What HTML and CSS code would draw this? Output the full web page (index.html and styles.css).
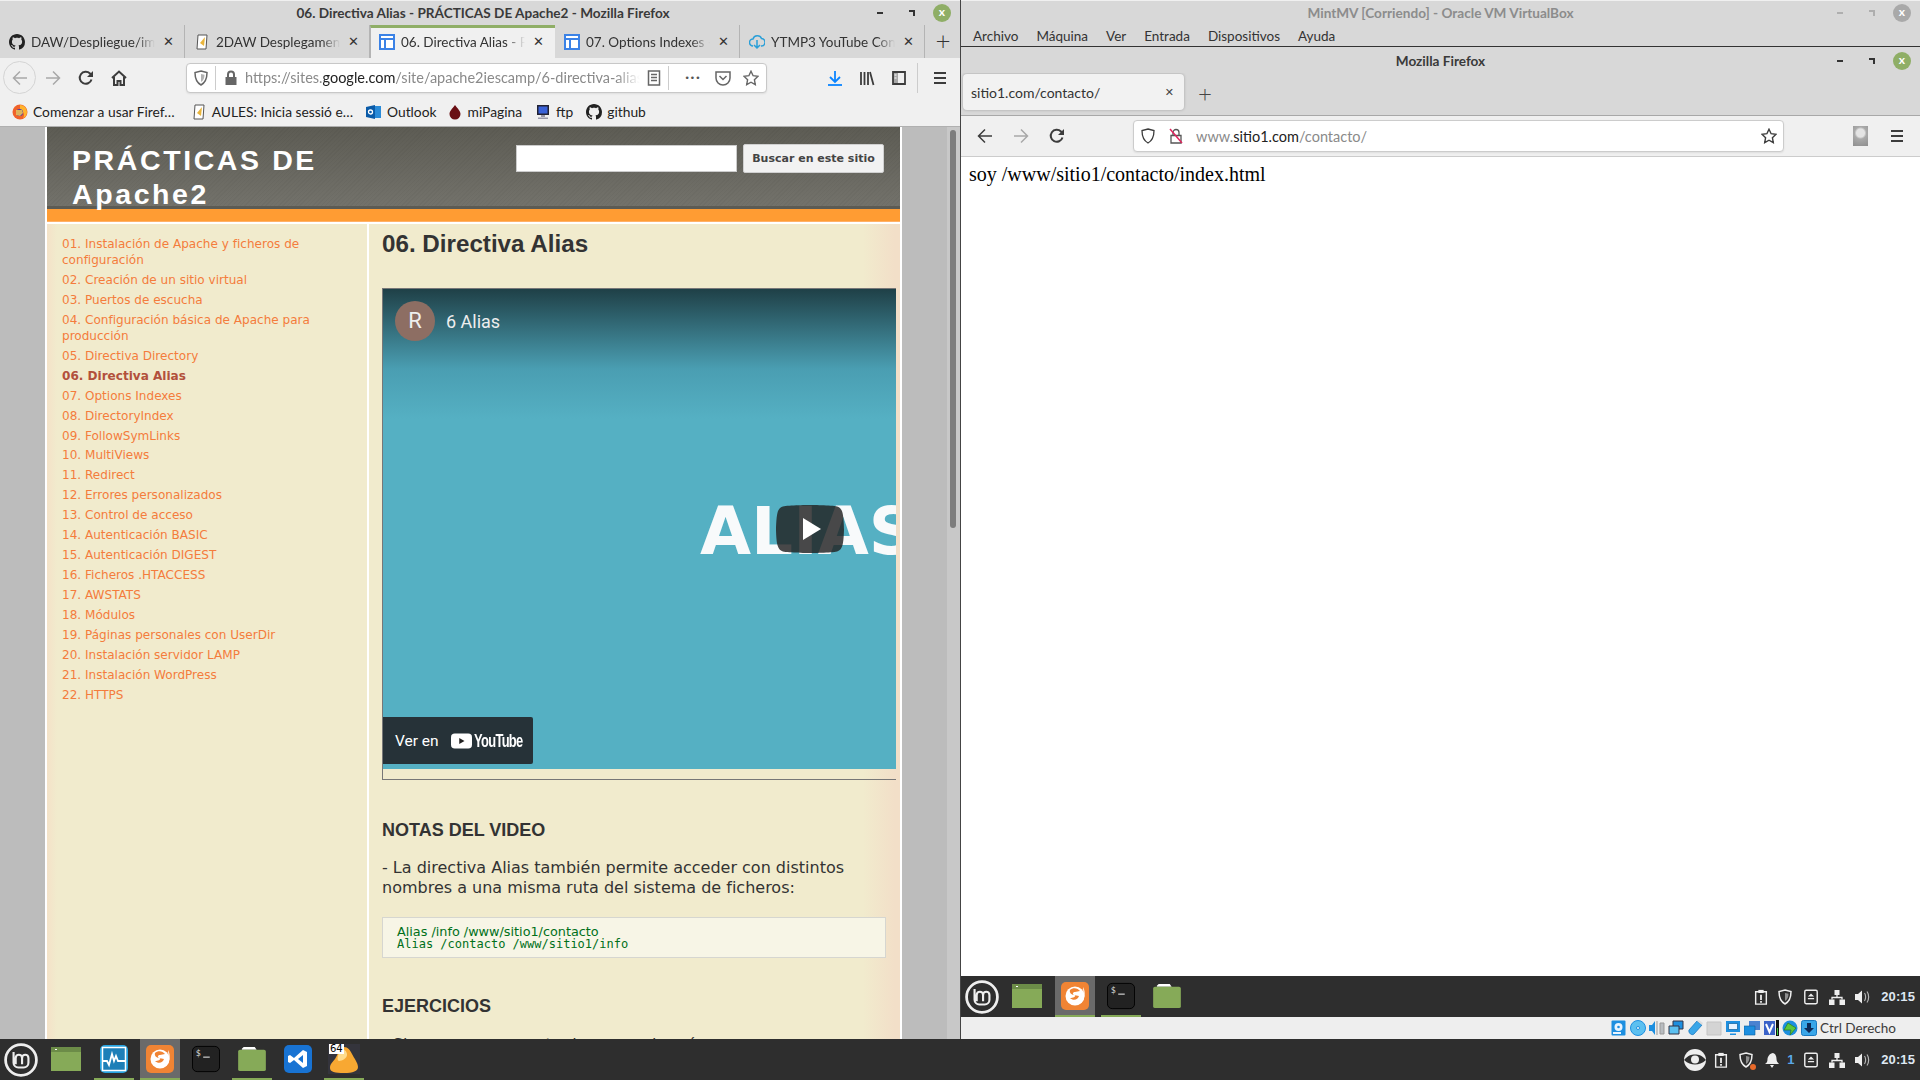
FILE: index.html
```html
<!DOCTYPE html>
<html lang="es">
<head>
<meta charset="utf-8">
<title>Escritorio</title>
<link rel="stylesheet" href="styles.css">
</head>
<body>
<svg class="defs" aria-hidden="true">
  <symbol id="gh" viewBox="0 0 16 16"><path d="M8 0C3.58 0 0 3.58 0 8c0 3.54 2.29 6.53 5.47 7.59.4.07.55-.17.55-.38 0-.19-.01-.82-.01-1.49-2.01.37-2.53-.49-2.69-.94-.09-.23-.48-.94-.82-1.13-.28-.15-.68-.52-.01-.53.63-.01 1.08.58 1.23.82.72 1.21 1.87.87 2.33.66.07-.52.28-.87.51-1.07-1.78-.2-3.64-.89-3.64-3.95 0-.87.31-1.59.82-2.15-.08-.2-.36-1.02.08-2.12 0 0 .67-.21 2.2.82.64-.18 1.32-.27 2-.27.68 0 1.36.09 2 .27 1.53-1.04 2.2-.82 2.2-.82.44 1.1.16 1.92.08 2.12.51.56.82 1.27.82 2.15 0 3.07-1.87 3.75-3.65 3.95.29.25.54.73.54 1.48 0 1.07-.01 1.93-.01 2.2 0 .21.15.46.55.38A8.013 8.013 0 0016 8c0-4.42-3.58-8-8-8z" fill="#222"/></symbol>
  <symbol id="sites" viewBox="0 0 16 16"><path d="M1 1h14v14H1z M1 5h14 M6 5v10" fill="#fff" stroke="#3b82e6" stroke-width="2"/></symbol>
  <symbol id="moodle" viewBox="0 0 16 16"><path d="M4 1h9l-1 14H3z" fill="#fff" stroke="#555"/><path d="M6 9l5-6-1 9z" fill="#e9b53c"/></symbol>
  <symbol id="ytmp3" viewBox="0 0 16 16"><path d="M4 12a3.5 3.5 0 0 1 0-7 4.5 4.5 0 0 1 8.500-.5A3.700 3.700 0 0 1 12 12M8 6v8m-3-3l3 3 3-3" fill="none" stroke="#2a9fd8" stroke-width="1.500"/></symbol>
  <symbol id="ffx" viewBox="0 0 16 16"><circle cx="8" cy="8" r="7.500" fill="#f0622a"/><path d="M8 1a7 7 0 0 1 7 7 7 7 0 0 1-4 6.300C13 11 12 7 8 6z" fill="#ffb32c"/><circle cx="7.500" cy="8.500" r="3.500" fill="#4a3aa8"/><path d="M4 6h6l1 3-3 3-4-1z" fill="#ffd24a" opacity=".8"/></symbol>
  <symbol id="back" viewBox="0 0 16 16"><path d="M15 8H2m6-6.500L1.500 8 8 14.500" fill="none" stroke="currentColor" stroke-width="1.500"/></symbol>
  <symbol id="fwd" viewBox="0 0 16 16"><path d="M1 8h13M8 1.500 14.500 8 8 14.500" fill="none" stroke="currentColor" stroke-width="1.500"/></symbol>
  <symbol id="reload" viewBox="0 0 16 16"><path d="M13.500 9.500A6 6 0 1 1 12 3.500L14 5.500" fill="none" stroke="currentColor" stroke-width="2"/><path d="M15 1v6H9z" fill="currentColor"/></symbol>
  <symbol id="home" viewBox="0 0 16 16"><path d="M1 8l7-6.500L15 8M3 7v8h3.500v-4h3v4H13V7" fill="none" stroke="currentColor" stroke-width="2"/></symbol>
  <symbol id="shield" viewBox="0 0 16 16"><path d="M8 1l6 1.500c0 6-1.500 10-6 12.500C3.500 12.500 2 8.500 2 2.500z" fill="none" stroke="currentColor" stroke-width="1.500"/><path d="M8 4l3.500.8C11.500 8 10.500 10.500 8 12z" fill="currentColor" opacity=".5"/></symbol>
  <symbol id="shield0" viewBox="0 0 16 16"><path d="M8 1l6 1.500c0 6-1.500 10-6 12.500C3.500 12.500 2 8.500 2 2.500z" fill="none" stroke="currentColor" stroke-width="1.300"/></symbol>
  <symbol id="lock" viewBox="0 0 16 16"><path d="M2.500 7h11v8h-11z" fill="currentColor"/><path d="M5 7V4.500a3 3 0 0 1 6 0V7" fill="none" stroke="currentColor" stroke-width="2"/></symbol>
  <symbol id="lockx" viewBox="0 0 16 16"><path d="M3 7.500h10v7.500H3zM5 7.500V4.500a3 3 0 0 1 6 0v3" fill="none" stroke="#555" stroke-width="1.300"/><path d="M2 1l12 14" stroke="#e0245e" stroke-width="1.500"/></symbol>
  <symbol id="reader" viewBox="0 0 16 16"><path d="M2.500 1h11v14h-11zM5 4.500h6M5 7.500h6M5 10.500h6" fill="none" stroke="currentColor" stroke-width="1.500"/></symbol>
  <symbol id="pocket" viewBox="0 0 16 16"><path d="M1 2h14v6a7 7 0 0 1-14 0z" fill="none" stroke="currentColor" stroke-width="1.500"/><path d="M4.500 6L8 9.500 11.500 6" fill="none" stroke="currentColor" stroke-width="1.500"/></symbol>
  <symbol id="star" viewBox="0 0 16 16"><path d="M8 1.200l2.100 4.500 4.900.6-3.600 3.400.9 4.900L8 12.200l-4.300 2.400.9-4.900L1 6.300l4.900-.6z" fill="none" stroke="currentColor" stroke-width="1.400"/></symbol>
  <symbol id="dl" viewBox="0 0 16 16"><path d="M8 1v10M3 7l5 5 5-5" fill="none" stroke="#0a84ff" stroke-width="1.800"/><path d="M1 15h14" stroke="#0a84ff" stroke-width="1.800"/></symbol>
  <symbol id="library" viewBox="0 0 16 16"><path d="M2 2v13M5.500 2v13M9 2v13M11 2l3.500 13" fill="none" stroke="currentColor" stroke-width="1.800"/></symbol>
  <symbol id="sidebar" viewBox="0 0 16 16"><path d="M2 2h12v12H2z" fill="none" stroke="currentColor" stroke-width="1.800"/><path d="M2 2h5v12H2z" fill="currentColor" opacity=".4"/><path d="M3.500 5h2M3.500 8h2" stroke="#fff"/></symbol>
  <symbol id="menu" viewBox="0 0 16 16"><path d="M2 3h12M2 8h12M2 13h12" stroke="currentColor" stroke-width="1.800"/></symbol>
  <symbol id="outlook" viewBox="0 0 16 16"><path d="M5 2h10v12H5z" fill="#2a8bd8"/><path d="M0 3l9-2v14l-9-2z" fill="#0a5ba8"/><circle cx="4.500" cy="8" r="2" fill="none" stroke="#fff" stroke-width="1.300"/></symbol>
  <symbol id="drop" viewBox="0 0 16 16"><path d="M8 1c3 4 5.500 6 5.500 9A5.500 5.500 0 0 1 2.500 10C2.500 7 5 5 8 1z" fill="#6a0f14"/></symbol>
  <symbol id="ftp" viewBox="0 0 16 16"><path d="M2 1h12v10H2z" fill="#223" /><path d="M3.500 2.500h9v7h-9z" fill="#3a62d8"/><path d="M6 11h4v2H6zM3 13.500h10V15H3z" fill="#99a"/></symbol>
  <symbol id="mint" viewBox="0 0 32 32"><circle cx="16" cy="16" r="14.500" fill="none" stroke="#eee" stroke-width="2.600"/><path d="M9 8.500v10a4.500 4.500 0 0 0 4.500 4.500h5a4.500 4.500 0 0 0 4.500-4.500V14a3 3 0 0 0-6 0v6m0-6a3 3 0 0 0-6 0v6" fill="none" stroke="#eee" stroke-width="2"/></symbol>
  <symbol id="fgreen" viewBox="0 0 30 24"><path d="M0 0h30v24H0z" fill="#86aa58"/><path d="M0 0h30v5H0z" fill="#6c8c48"/><path d="M4 2h2v1H4z" fill="#fff"/></symbol>
  <symbol id="folder" viewBox="0 0 30 26"><path d="M4 2l2-2h12l2 3h-16z" fill="#fff"/><path d="M0 5a2 2 0 0 1 2-2h26a2 2 0 0 1 2 2v19a2 2 0 0 1-2 2H2a2 2 0 0 1-2-2z" fill="#86aa58"/></symbol>
  <symbol id="sysmon" viewBox="0 0 28 28"><rect width="28" height="28" rx="5" fill="#27a3e0"/><rect x="2.500" y="2.500" width="23" height="23" fill="#1d7fb8" stroke="#fff" stroke-width="1.500"/><path d="M3 16h4l2 4 3-11 2 7 2-5 2 5h7" fill="none" stroke="#fff" stroke-width="1.800"/></symbol>
  <symbol id="ffapp" viewBox="0 0 28 28"><rect width="28" height="28" rx="5" fill="#f08434"/><circle cx="14" cy="14" r="9.500" fill="#fff"/><path d="M9 8c3-3 8-2 10 1l-5 1c-2 0-3 2-1 3l5 1c-1 4-6 5-9 2 3 0 6-1 5-3-3 0-6-2-5-5z" fill="#f08434"/><path d="M22 5c3 5 2 13-3 17 3-5 4-11 3-17z" fill="#fff"/></symbol>
  <symbol id="term" viewBox="0 0 30 28"><rect x=".5" y=".5" width="29" height="27" rx="5" fill="#222" stroke="#000"/><text x="4" y="11" font-family="DejaVu Sans Mono" font-size="9" fill="#ddd">$</text><path d="M12 12h7" stroke="#ddd" stroke-width="1.200"/></symbol>
  <symbol id="vscode" viewBox="0 0 28 28"><rect width="28" height="28" rx="5" fill="#1873d3"/><path d="M19 5l4 2v14l-4 2-9-8-4 3-2-1v-6l2-1 4 3zM19 10l-5 4 5 4z" fill="#fff"/></symbol>
  <symbol id="vbox64" viewBox="0 0 32 30"><rect width="32" height="30" fill="#34343c"/><path d="M16 3c4 0 6 3 8 7s6 9 6 13-5 6-14 6-14-1-14-5 2-5 5-9 4-12 9-12z" fill="#f8a832"/><path d="M14 6c3-1 5 2 5 5s-5 6-8 6-1-9 3-11z" fill="#ffdc8c"/></symbol>
  <symbol id="clip" viewBox="0 0 16 18"><path d="M2 3h12v14H2z" fill="none" stroke="currentColor" stroke-width="1.600"/><path d="M5 1h6v3.500H5z" fill="currentColor"/><path d="M8 6.500v6M8 13.500v2" stroke="currentColor" stroke-width="2"/></symbol>
  <symbol id="eject" viewBox="0 0 16 18"><rect x="1" y="1.500" width="14" height="15" rx="1.500" fill="none" stroke="currentColor" stroke-width="1.600"/><path d="M8 5l3.500 3.500h-7zM4.500 10h7v1.500h-7z" fill="currentColor"/></symbol>
  <symbol id="net" viewBox="0 0 16 16"><path d="M5.500 1h5v5h-5zM0 10.500h5.500V16H0zM10.500 10.500H16V16h-5.500z" fill="currentColor"/><path d="M8 6v3M3 10.500V8.500h10v2" fill="none" stroke="currentColor" stroke-width="1.300"/></symbol>
  <symbol id="vol" viewBox="0 0 16 16"><path d="M0 5h3l4-3.500v13L3 11H0z" fill="currentColor"/><path d="M9.500 4c1.500 2 1.500 6 0 8M12 2.500c2.200 3 2.200 8 0 11" fill="none" stroke="currentColor" stroke-width="1.200" opacity=".7"/></symbol>
  <symbol id="bell" viewBox="0 0 16 16"><path d="M9 1c3 1 3.500 4 3.500 6s1 3.500 2.500 5H1c2-1 2.500-3 2.500-5S6 1 9 1zM6 13h4l-2 3z" fill="currentColor"/></symbol>
  <symbol id="eye" viewBox="0 0 22 22"><circle cx="11" cy="11" r="11" fill="#eee"/><path d="M0 11c4-4.500 7-5.500 11-5.500s7 1 11 5.500c-4 3.500-7 4.500-11 4.500S4 14.500 0 11z" fill="#2e2e2e"/><circle cx="11" cy="10.500" r="4" fill="#eee"/></symbol>
  <symbol id="s-hdd" viewBox="0 0 16 16"><rect x=".5" y=".5" width="14" height="15" rx="1" fill="#1d8fe0"/><circle cx="7.500" cy="7" r="4" fill="#e8f4ff"/><circle cx="7.500" cy="7" r="1.300" fill="#1d8fe0"/><path d="M2 13h8" stroke="#e8f4ff" stroke-width="2"/></symbol>
  <symbol id="s-cd" viewBox="0 0 16 16"><circle cx="8" cy="8" r="7.500" fill="#5cc0f0" stroke="#1d8fe0"/><circle cx="8" cy="8" r="1.500" fill="#fff" stroke="#1d8fe0"/></symbol>
  <symbol id="s-audio" viewBox="0 0 16 16"><path d="M0 5h3l3-4v14l-3-4H0z" fill="#1d8fe0"/><path d="M8 1v14M11 3h4v11h-4z" fill="#b8bcc0" stroke="#999"/></symbol>
  <symbol id="s-net" viewBox="0 0 16 16"><path d="M5 1h10v8H5z" fill="#1d8fe0" stroke="#334"/><path d="M1 6h10v8H1z" fill="#5cc0f0" stroke="#334"/></symbol>
  <symbol id="s-usb" viewBox="0 0 16 16"><path d="M10 1l5 4-8 9c-2 2-6-1-5-4z" fill="#3aa6e8" stroke="#1878c0" stroke-width=".8"/><path d="M10 1l2-1 4 3-1 2z" fill="#ddd"/></symbol>
  <symbol id="s-shared" viewBox="0 0 16 16"><path d="M1 2h14v13H1z" fill="#d4d4d4" stroke="#c4c4c4"/></symbol>
  <symbol id="s-disp" viewBox="0 0 16 16"><path d="M1 1h14v11H1z" fill="#1d8fe0"/><path d="M3.500 3.500h9v6h-9z" fill="#e8f4ff" stroke="#0c5f9c" stroke-width=".7"/><path d="M5 13.500h6V15H5z" fill="#1d8fe0"/></symbol>
  <symbol id="s-cap" viewBox="0 0 16 16"><path d="M5 1h11v9H5z" fill="#4a82d0"/><path d="M0 6h11v9H0z" fill="#1d8fe0" stroke="#0c5f9c" stroke-width=".6"/></symbol>
  <symbol id="s-v" viewBox="0 0 16 16"><path d="M1 1h11v14H1z" fill="#3a62c8"/><path d="M3 4l3.500 8L10 4" fill="none" stroke="#fff" stroke-width="2"/><path d="M13 0h3v16h-3z" fill="#111"/><path d="M14 8h1v7h-1z" fill="#3ac83a"/></symbol>
  <symbol id="s-globe" viewBox="0 0 16 16"><circle cx="8" cy="8" r="7.500" fill="#1d8fe0"/><path d="M6 3l8 5-6 7 1-5H2z" fill="#5cc83a" stroke="#2a7a18" stroke-width=".7"/></symbol>
  <symbol id="s-down" viewBox="0 0 16 16"><rect x=".5" y=".5" width="15" height="15" rx="2" fill="#3aa6e8" stroke="#1878c0"/><path d="M6 3h4v5h3l-5 5-5-5h3z" fill="#0e2a58"/></symbol>
</svg>

<div class="desktop">
  <div class="windows">
    <section class="win win-left">
      <header class="titlebar active">
        <span class="title-text">06. Directiva Alias - PRÁCTICAS DE Apache2 - Mozilla Firefox</span>
        <div class="wbtns"><i class="wb-min"></i><i class="wb-res"></i><i class="wb-close">x</i></div>
      </header>
      <nav class="ff-tabs">
        <div class="ff-tab"><svg class="ico-16"><use href="#gh"/></svg><span class="ff-tab-title">DAW/Despliegue/imagenes</span><span class="ff-x">✕</span></div>
        <div class="ff-tab"><svg class="ico-16"><use href="#moodle"/></svg><span class="ff-tab-title">2DAW Desplegament</span><span class="ff-x">✕</span></div>
        <div class="ff-tab selected"><svg class="ico-16"><use href="#sites"/></svg><span class="ff-tab-title">06. Directiva Alias - PRÁCTICAS</span><span class="ff-x">✕</span></div>
        <div class="ff-tab"><svg class="ico-16"><use href="#sites"/></svg><span class="ff-tab-title">07. Options Indexes - PRÁCTICAS</span><span class="ff-x">✕</span></div>
        <div class="ff-tab"><svg class="ico-16"><use href="#ytmp3"/></svg><span class="ff-tab-title">YTMP3 YouTube Converter</span><span class="ff-x">✕</span></div>
        <div class="ff-newtab">+</div>
      </nav>
      <div class="ff-bar">
        <span class="tb tb-back"><svg class="ico-16 dim"><use href="#back"/></svg></span>
        <span class="tb"><svg class="ico-16 dim"><use href="#fwd"/></svg></span>
        <span class="tb"><svg class="ico-16"><use href="#reload"/></svg></span>
        <span class="tb"><svg class="ico-16"><use href="#home"/></svg></span>
        <div class="urlbar url-left">
          <span class="u-slot"><svg class="ico-16 mid"><use href="#shield"/></svg></span>
          <span class="u-sep"></span>
          <span class="u-lock"><svg class="ico-16 mid"><use href="#lock"/></svg></span>
          <span class="url-text fade">https://sites.<b>google.com</b>/site/apache2iescamp/6-directiva-alias</span>
          <span class="u-slot"><svg class="ico-16 mid"><use href="#reader"/></svg></span>
          <span class="u-sep"></span>
          <span class="u-dots">•••</span>
          <span class="u-slot"><svg class="ico-16 mid"><use href="#pocket"/></svg></span>
          <span class="u-slot"><svg class="ico-16 mid"><use href="#star"/></svg></span>
        </div>
        <span class="tb tb-dl"><svg class="ico-16"><use href="#dl"/></svg></span>
        <span class="tb tb-wide"><svg class="ico-16"><use href="#library"/></svg></span>
        <span class="tb tb-wide"><svg class="ico-16"><use href="#sidebar"/></svg></span>
        <span class="tb-sep"></span>
        <span class="tb"><svg class="ico-16"><use href="#menu"/></svg></span>
      </div>
      <div class="ff-bookmarks">
        <span class="bm bm-1"><svg class="ico-16"><use href="#ffx"/></svg>Comenzar a usar Firef…</span>
        <span class="bm bm-2"><svg class="ico-16"><use href="#moodle"/></svg>AULES: Inicia sessió e…</span>
        <span class="bm bm-3"><svg class="ico-16"><use href="#outlook"/></svg>Outlook</span>
        <span class="bm bm-4"><svg class="ico-16"><use href="#drop"/></svg>miPagina</span>
        <span class="bm bm-5"><svg class="ico-16"><use href="#ftp"/></svg>ftp</span>
        <span class="bm bm-6"><svg class="ico-16"><use href="#gh"/></svg>github</span>
      </div>
      <div class="viewport">
        <div class="page-scroll">
          <div class="site">
            <div class="site-head">
              <h2 class="site-name">PRÁCTICAS DE<br>Apache2</h2>
              <form class="site-search"><span class="s-input"></span><span class="s-btn">Buscar en este sitio</span></form>
            </div>
            <div class="site-orange"></div>
            <div class="site-body">
              <aside class="side">
                <a>01. Instalación de Apache y ficheros de configuración</a>
                <a>02. Creación de un sitio virtual</a>
                <a>03. Puertos de escucha</a>
                <a>04. Configuración básica de Apache para producción</a>
                <a>05. Directiva Directory</a>
                <a class="current">06. Directiva Alias</a>
                <a>07. Options Indexes</a>
                <a>08. DirectoryIndex</a>
                <a>09. FollowSymLinks</a>
                <a>10. MultiViews</a>
                <a>11. Redirect</a>
                <a>12. Errores personalizados</a>
                <a>13. Control de acceso</a>
                <a>14. Autenticación BASIC</a>
                <a>15. Autenticación DIGEST</a>
                <a>16. Ficheros .HTACCESS</a>
                <a>17. AWSTATS</a>
                <a>18. Módulos</a>
                <a>19. Páginas personales con UserDir</a>
                <a>20. Instalación servidor LAMP</a>
                <a>21. Instalación WordPress</a>
                <a>22. HTTPS</a>
              </aside>
              <main class="article">
                <h1>06. Directiva Alias</h1>
                <div class="embed">
                  <div class="video">
                    <span class="v-avatar">R</span>
                    <span class="v-title">6 Alias</span>
                    <span class="v-word">ALIAS</span>
                    <svg class="v-play" viewBox="0 0 68 48"><path d="M66.500 7.700c-.8-2.900-2.500-5.400-5.400-6.200C55.800.1 34 0 34 0S12.200.1 6.900 1.500C4 2.300 2.300 4.800 1.500 7.700.1 13 0 24 0 24s.1 11 1.500 16.300c.8 2.900 2.500 5.400 5.400 6.200C12.200 47.900 34 48 34 48s21.800-.1 27.100-1.500c2.900-.8 4.600-3.300 5.400-6.200C67.900 35 68 24 68 24s-.1-11-1.500-16.300z" fill="#212121" fill-opacity=".82"/><path d="M27 13v22l18-11z" fill="#fff"/></svg>
                    <div class="v-watch"><span class="v-ver">Ver en</span><svg class="v-yt" viewBox="0 0 28 20"><rect width="28" height="20" rx="5" fill="#fff"/><path d="M11 6v8l7-4z" fill="#212121"/></svg><b class="v-ytw">YouTube</b></div>
                  </div>
                </div>
                <h3 class="h-notas">NOTAS DEL VIDEO</h3>
                <p class="para">- La directiva Alias también permite acceder con distintos nombres a una misma ruta del sistema de ficheros:</p>
                <div class="code"><span class="code-a">Alias /info /www/sitio1/contacto</span><span class="code-b">Alias /contacto /www/sitio1/info</span></div>
                <h3 class="h-ejer">EJERCICIOS</h3>
                <p class="para para-last">- Si usamos como ruta de acceso la más</p>
              </main>
            </div>
          </div>
        </div>
        <div class="scrollbar"><span class="thumb"></span></div>
      </div>
    </section>

    <section class="win win-right">
      <header class="titlebar inactive">
        <span class="title-text">MintMV [Corriendo] - Oracle VM VirtualBox</span>
        <div class="wbtns"><i class="wb-min"></i><i class="wb-res"></i><i class="wb-close">x</i></div>
      </header>
      <div class="vb-menu"><span>Archivo</span><span>Máquina</span><span>Ver</span><span>Entrada</span><span>Dispositivos</span><span>Ayuda</span></div>
      <div class="guest">
        <header class="titlebar guest-title">
          <span class="title-text">Mozilla Firefox</span>
          <div class="wbtns"><i class="wb-min"></i><i class="wb-res"></i><i class="wb-close">x</i></div>
        </header>
        <nav class="g-tabs">
          <div class="g-tab"><span class="g-tab-title">sitio1.com/contacto/</span><span class="g-x">✕</span></div>
          <span class="g-new">+</span>
        </nav>
        <div class="g-bar">
          <span class="g-tb"><svg class="ico-16 thin"><use href="#back"/></svg></span>
          <span class="g-tb"><svg class="ico-16 thin dim"><use href="#fwd"/></svg></span>
          <span class="g-tb"><svg class="ico-16 thin"><use href="#reload"/></svg></span>
          <div class="urlbar url-right">
            <span class="g-slot"><svg class="ico-16 thin"><use href="#shield0"/></svg></span>
            <span class="g-slot"><svg class="ico-16"><use href="#lockx"/></svg></span>
            <span class="url-text g-url">www.<b>sitio1.com</b>/contacto/</span>
            <span class="g-slot"><svg class="ico-16 thin"><use href="#star"/></svg></span>
          </div>
          <span class="g-profile"></span>
          <span class="g-tb"><svg class="ico-16 thin"><use href="#menu"/></svg></span>
        </div>
        <div class="g-content">soy /www/sitio1/contacto/index.html</div>
        <div class="panel panel-guest">
          <svg class="p-logo"><use href="#mint"/></svg>
          <span class="launch l-folder"><svg class="i-30"><use href="#fgreen"/></svg></span>
          <span class="launch hot on"><svg class="i-28"><use href="#ffapp"/></svg></span>
          <span class="launch on"><svg class="i-28"><use href="#term"/></svg></span>
          <span class="launch l-folder2"><svg class="i-30"><use href="#folder"/></svg></span>
          <div class="tray">
            <svg class="t-ico t-clip"><use href="#clip"/></svg>
            <svg class="t-ico"><use href="#shield"/></svg>
            <svg class="t-ico"><use href="#eject"/></svg>
            <svg class="t-ico"><use href="#net"/></svg>
            <svg class="t-ico"><use href="#vol"/></svg>
            <span class="clock">20:15</span>
          </div>
        </div>
      </div>
      <div class="vb-status">
        <svg class="st"><use href="#s-hdd"/></svg>
        <svg class="st"><use href="#s-cd"/></svg>
        <svg class="st"><use href="#s-audio"/></svg>
        <svg class="st"><use href="#s-net"/></svg>
        <svg class="st"><use href="#s-usb"/></svg>
        <svg class="st"><use href="#s-shared"/></svg>
        <svg class="st"><use href="#s-disp"/></svg>
        <svg class="st"><use href="#s-cap"/></svg>
        <svg class="st"><use href="#s-v"/></svg>
        <svg class="st"><use href="#s-globe"/></svg>
        <svg class="st"><use href="#s-down"/></svg>
        <span class="vb-key">Ctrl Derecho</span>
      </div>
    </section>
  </div>

  <footer class="panel panel-host">
    <svg class="p-logo"><use href="#mint"/></svg>
    <span class="launch l-h1"><svg class="i-30"><use href="#fgreen"/></svg></span>
    <span class="launch l-h2 on"><svg class="i-28"><use href="#sysmon"/></svg></span>
    <span class="launch hot on"><svg class="i-28"><use href="#ffapp"/></svg></span>
    <span class="launch l-h3"><svg class="i-28"><use href="#term"/></svg></span>
    <span class="launch on l-h4"><svg class="i-30"><use href="#folder"/></svg></span>
    <span class="launch l-h5"><svg class="i-28"><use href="#vscode"/></svg></span>
    <span class="launch on l-h6"><svg class="i-32"><use href="#vbox64"/></svg><em class="badge64">64</em></span>
    <div class="tray">
      <svg class="t-eye"><use href="#eye"/></svg>
      <svg class="t-ico"><use href="#clip"/></svg>
      <span class="t-shield"><svg class="t-ico"><use href="#shield"/></svg><i class="t-dot"></i></span>
      <svg class="t-ico t-bell"><use href="#bell"/></svg>
      <span class="t-count">1</span>
      <svg class="t-ico"><use href="#eject"/></svg>
      <svg class="t-ico"><use href="#net"/></svg>
      <svg class="t-ico"><use href="#vol"/></svg>
      <span class="clock">20:15</span>
    </div>
  </footer>
</div>
</body>
</html>
```

FILE: styles.css
```css
* { box-sizing: border-box; }
html, body { margin: 0; height: 100%; overflow: hidden; }
body { font-family: "Lato", "Noto Sans", sans-serif; font-size: 13px; color: #333; background: #2e2e2e; }
.defs { width: 0; height: 0; position: absolute; }

.desktop { display: flex; flex-direction: column; height: 1080px; }
.windows { display: flex; height: 1039px; }
.win { display: flex; flex-direction: column; min-width: 0; }
.win-left { width: 960px; background: #d8d8d8; }
.win-right { width: 960px; background: #d8d8d8; border-left: 1px solid #444; }

.ico-16 { width: 16px; height: 16px; flex: none; color: #3c3c3c; }
.ico-16.thin { color: #3c3c3c; }
.ico-16.mid { color: #666; }
.ico-16.dim { color: #a8a8a8; }

/* Title bars */
.titlebar { height: 25px; flex: none; position: relative; display: flex; align-items: center; justify-content: center; background: #d8d8d8; border-top: 1px solid #f0f0f0; font-size: 13.600px; font-weight: 700; color: #3a3a3a; }
.titlebar.active { padding-left: 6px; }
.titlebar.inactive { color: #8c8c8c; }
.wbtns { position: absolute; right: 9px; top: 3px; display: flex; align-items: center; gap: 18px; height: 18px; }
.wbtns i { display: block; font-style: normal; }
.wb-min { width: 6px; height: 2px; background: #333; margin-right: 8px; }
.wb-res { width: 6px; height: 6px; border-top: 2px solid #333; border-right: 2px solid #333; }
.wb-close { width: 18px; height: 18px; border-radius: 50%; background: #8fae66; color: #fff; text-align: center; line-height: 16px; font-size: 12px; }
.inactive .wb-min, .inactive .wb-res { opacity: .25; }
.inactive .wb-close { background: #a9a9a9; }

/* Firefox left */
.ff-tabs { height: 33px; flex: none; display: flex; background: #d8d8d8; }
.ff-tab { width: 185px; flex: none; display: flex; align-items: center; padding: 0 9px 0 9px; border-right: 1px solid #b4b4b4; color: #333; font-size: 13.500px; }
.ff-tab.selected { background: #f0f0f0; border-top: 3px solid #8fae66; border-right: 0; border-left: 1px solid #b4b4b4; padding-left: 8px; padding-bottom: 3px; }
.ff-tab-title { margin-left: 6px; width: 124px; flex: none; white-space: nowrap; overflow: hidden; -webkit-mask-image: linear-gradient(to right, #000 85%, transparent); mask-image: linear-gradient(to right, #000 85%, transparent); }
.ff-x { margin-left: 8px; font-size: 13px; color: #333; font-family: "DejaVu Sans", sans-serif; }
.ff-newtab { width: 30px; margin-left: 3px; text-align: center; font-size: 26px; line-height: 31px; font-weight: 300; color: #333; }

.ff-bar { height: 39px; flex: none; display: flex; align-items: center; background: #f0f0f0; padding-left: 3px; }
.tb { width: 33px; height: 33px; flex: none; display: flex; align-items: center; justify-content: center; }
.tb-back { border: 1px solid #d4d4d4; border-radius: 50%; }
.urlbar { display: flex; align-items: center; background: #fff; border: 1px solid #c8c8c8; border-radius: 4px; flex: none; box-shadow: 0 1px 2px rgba(0,0,0,.08); }
.url-left { width: 581px; height: 30px; margin-left: 51px; }
.u-slot { width: 28px; flex: none; display: flex; justify-content: center; }
.u-sep { width: 1px; height: 24px; background: #ccc; flex: none; }
.u-lock { width: 29px; flex: none; display: flex; justify-content: center; }
.u-dots { width: 33px; margin-left: 7px; text-align: center; font-size: 9px; color: #555; flex: none; font-family: "DejaVu Sans", sans-serif; }
.url-text { font-size: 14.500px; color: #8a8a8a; white-space: nowrap; overflow: hidden; }
.url-text b { font-weight: 400; color: #222; }
.url-text.fade { width: 395px; flex: none; -webkit-mask-image: linear-gradient(to right, #000 94%, transparent); mask-image: linear-gradient(to right, #000 94%, transparent); margin-left: 0; }
.tb-dl { margin-left: 51px; }
.tb-wide { margin-left: -1px; }
.tb-sep { width: 1px; height: 30px; background: #ccc; margin-left: 2px; flex: none; margin-right: 5px; }

.ff-bookmarks { height: 29px; flex: none; display: flex; align-items: center; background: #f0f0f0; font-size: 13.800px; color: #222; white-space: nowrap; }
.bm { display: flex; align-items: center; gap: 5px; flex: none; }
.bm-1 { margin-left: 12px; }
.bm-2 { margin-left: 16px; }
.bm-3 { margin-left: 13px; }
.bm-4 { margin-left: 10px; }
.bm-5 { margin-left: 13px; }
.bm-6 { margin-left: 13px; }

/* Page viewport */
.viewport { flex: 1; min-height: 0; display: flex; background: #bcbcbc; border-top: 1px solid #b0b0b0; overflow: hidden; }
.page-scroll { flex: 1; min-width: 0; padding-left: 45px; overflow: hidden; }
.scrollbar { width: 13px; flex: none; background: #c8c8c8; padding: 3px 3px 0; }
.thumb { display: block; width: 6px; height: 398px; border-radius: 3px; background: #7d7d7d; }

.site { width: 857px; background: #fff; padding: 0 2px; font-family: "DejaVu Sans", sans-serif; }
.site-head { height: 82px; display: flex; justify-content: space-between; padding: 17px 16px 0 25px;
  background: repeating-linear-gradient(135deg, rgba(0,0,0,.03) 0 1px, transparent 1px 3px), linear-gradient(#5d5c54, #73726b);
  border-bottom: 3px solid #5c5b54; }
.site-name { margin: -1px 0 0; font: 700 28.500px/34px "Liberation Sans", sans-serif; letter-spacing: 2.600px; color: #fff; height: 60px; white-space: nowrap; }
.site-search { display: flex; gap: 6px; align-items: flex-start; }
.s-input { width: 221px; height: 27px; margin-top: 1px; background: #fff; border: 1px solid #ccc; }
.s-btn { width: 141px; height: 29px; background: #f2f2f2; border: 1px solid #d0d0d0; border-radius: 2px; text-align: center; font-size: 11px; line-height: 27px; font-weight: 700; color: #444; }
.site-orange { height: 13px; background: #ff9c33; border-bottom: 1px solid #ffb066; }
.site-body { margin-top: 2px; display: flex; height: 820px; overflow: hidden; }
.side { width: 320px; flex: none; background: linear-gradient(to right, #f4e2c8, #f1ebcd 10px); padding: 12px 10px 0 15px; display: flex; flex-direction: column; gap: 3.950px; font-size: 12.050px; line-height: 16px; color: #f47c3c; }
.side .current { font-weight: 700; color: #b2503c; }
.article { flex: 1; min-width: 0; margin-left: 1px; border-left: 1px solid #fff; background: linear-gradient(to right, #f1ebcd 93%, #f2dfc8 99%); padding-left: 13px; overflow: hidden; color: #333; }
.article h1 { margin: 5px 0 0; font: 700 24.200px/30px "Liberation Sans", sans-serif; color: #333; }
.embed { margin-top: 29px; width: 514px; height: 492px; border-top: 1px solid #777; border-left: 1px solid #777; border-bottom: 1px solid #777; }
.video { position: relative; width: 513px; height: 480px; overflow: hidden; background: linear-gradient(#1f4047 0, #4a9eb2 80px, #55b0c3 130px); }
.v-avatar { position: absolute; left: 12px; top: 12px; width: 40px; height: 40px; border-radius: 50%; background: #8d6e63; color: #eee; text-align: center; font: 400 22px/40px Roboto, sans-serif; }
.v-title { position: absolute; left: 63px; top: 22px; font: 400 18px/22px Roboto, sans-serif; color: #eee; }
.v-word { position: absolute; left: 317px; top: 205px; font: 700 66px/76px "DejaVu Sans", sans-serif; color: #f8fafb; white-space: nowrap; }
.v-play { position: absolute; left: 393px; top: 216px; width: 68px; height: 48px; }
.v-watch { position: absolute; left: 0; top: 428px; width: 150px; height: 47px; display: flex; align-items: center; background: #263238; border-radius: 0 2px 2px 0; padding-left: 12px; color: #fff; font: 400 15.500px Roboto, sans-serif; white-space: nowrap; }
.v-ver { flex: none; }
.v-yt { width: 21px; height: 16px; margin-left: 12px; flex: none; }
.v-ytw { font: 700 19px "Liberation Sans Narrow", "Liberation Sans", sans-serif; letter-spacing: -1px; margin-left: 2px; transform: scaleX(.68); transform-origin: left; white-space: nowrap; }
.h-notas, .h-ejer { margin: 0; font: 700 18px/22px "Liberation Sans", sans-serif; color: #333; }
.h-notas { margin-top: 39px; }
.para { margin: 17px 0 0; font-size: 16px; line-height: 20px; width: 500px; color: #333; }
.code { margin-top: 19px; width: 504px; height: 41px; background: #f7f5e6; border: 1px solid #d6d6d0; padding: 7px 14px 0; color: #00701a; font-size: 12px; line-height: 13px; }
.code span { display: block; white-space: pre; }
.code-a { font-family: "DejaVu Sans", sans-serif; font-size: 12.800px; }
.code-b { font-family: "DejaVu Sans Mono", monospace; }
.h-ejer { margin-top: 37px; }
.para-last { margin-top: 18px; white-space: nowrap; }

/* Right window */
.vb-menu { height: 22px; flex: none; display: flex; align-items: center; gap: 18px; padding-left: 12px; background: #d8d8d8; border-bottom: 1px solid #333; font-size: 13.500px; color: #333; }
.guest { flex: 1; min-height: 0; display: flex; flex-direction: column; }
.guest-title { border-top: 0; height: 26px; padding-top: 2px; font-weight: 700; }
.guest-title .wbtns { top: 5px; }
.g-tabs { height: 43px; flex: none; display: flex; align-items: center; background: #d8d8d8; border-bottom: 1px solid #a8a8a8; padding-left: 2px; }
.g-tab { width: 221px; height: 36px; display: flex; align-items: center; justify-content: space-between; background: #f2f2f2; border-radius: 4px; box-shadow: 0 0 3px rgba(0,0,0,.25); padding: 0 10px 0 8px; font-size: 14px; color: #333; margin-top: -4px; }
.g-x { font-size: 11px; color: #444; font-family: "DejaVu Sans", sans-serif; }
.g-new { margin-left: 14px; font-size: 24px; font-weight: 300; line-height: 36px; color: #444; margin-top: -2px; }
.g-bar { height: 41px; flex: none; display: flex; align-items: center; background: #f0f0f0; border-bottom: 1px solid #ccc; padding-left: 6px; }
.g-tb { width: 36px; flex: none; display: flex; justify-content: center; }
.url-right { width: 651px; height: 32px; margin-left: 58px; border-color: #ccc; }
.g-slot { width: 28px; flex: none; display: flex; justify-content: center; }
.g-url { margin-left: 6px; flex: 1; font-size: 14.500px; }
.g-profile { width: 15px; height: 20px; margin-left: 69px; background: radial-gradient(circle at 50% 35%, #e4e4e4 0 4px, #aaa 6px, #8e8e8e); flex: none; }
.g-profile + .g-tb { margin-left: 11px; }
.g-content { flex: 1; min-height: 0; background: #fff; padding: 6px 8px; font: 400 20px/22px "Liberation Serif", serif; color: #000; }

/* Panels */
.panel { height: 41px; flex: none; display: flex; align-items: center; background: #2e2e2e; color: #eee; }
.p-logo { width: 34px; height: 34px; margin-left: 4px; flex: none; }
.launch { position: relative; width: 40px; height: 41px; flex: none; display: flex; align-items: center; justify-content: center; border-bottom: 2px solid transparent; }
.launch.on { border-bottom-color: #86aa58; }
.launch.hot { background: #6a6a6a; }
.i-30 { width: 30px; height: 24px; }
.i-28 { width: 28px; height: 28px; }
.i-32 { width: 32px; height: 30px; }
.panel-guest .l-folder { margin-left: 8px; }
.panel-guest .hot { margin-left: 8px; }
.panel-guest .hot + .on { margin-left: 6px; }
.panel-guest .l-folder2 { margin-left: 6px; }
.panel-host .l-h1 { margin-left: 8px; }
.panel-host .l-h2 { margin-left: 8px; }
.panel-host .hot { margin-left: 6px; }
.panel-host .l-h3 { margin-left: 6px; }
.panel-host .l-h4 { margin-left: 6px; }
.panel-host .l-h5 { margin-left: 6px; }
.panel-host .l-h6 { margin-left: 6px; }
.badge64 { position: absolute; left: 5px; top: 5px; background: #fff; color: #000; font: 400 10px/10px "DejaVu Sans", sans-serif; padding: 0 1px; }
.tray { margin-left: auto; display: flex; align-items: center; gap: 10px; padding-right: 5px; color: #eee; }
.t-ico { width: 16px; height: 16px; color: #eee; flex: none; }
.t-clip { margin-right: -2px; }
.t-eye { width: 22px; height: 22px; flex: none; margin-right: -3px; }
.t-shield { position: relative; width: 16px; height: 16px; flex: none; margin-left: -1px; }
.t-dot { position: absolute; right: -2px; bottom: -2px; width: 6px; height: 6px; border-radius: 50%; background: #e96a2a; }
.t-bell { margin-left: 0; }
.t-count { width: 6px; font: 700 13px "Liberation Sans", sans-serif; color: #5aa8e8; margin-left: -3px; }
.clock { font: 700 13px "Liberation Sans", sans-serif; color: #dfe8f2; letter-spacing: .1px; }

.vb-status { height: 22px; flex: none; display: flex; align-items: center; justify-content: flex-end; gap: 3px; background: #eeeeee; padding-right: 24px; font-size: 13.500px; color: #3c3c3c; }
.st { width: 16px; height: 16px; flex: none; }
.vb-key { margin-left: 0; white-space: nowrap; }
```
